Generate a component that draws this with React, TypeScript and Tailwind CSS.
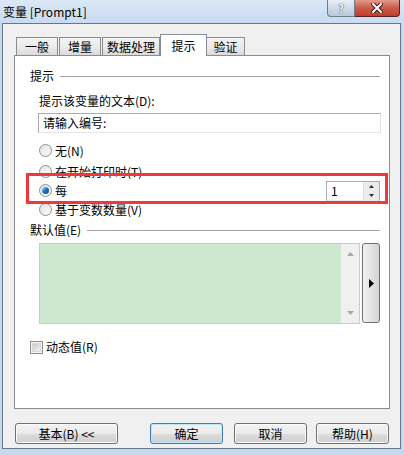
import React from 'react';

const FONT = { fontFamily: '"Noto Sans CJK SC", "Liberation Sans", sans-serif' };

const Radio = ({ checked }: { checked?: boolean }) => (
  <span className="w-[13px] h-[13px] rounded-full border border-[#8f8f8f] bg-gradient-to-br from-[#e4e4e4] to-[#fbfbfb] flex items-center justify-center shrink-0">
    {checked && (
      <span className="w-[7px] h-[7px] rounded-full bg-gradient-to-br from-[#9ad4f6] via-[#1a73c6] to-[#0a4d94]" />
    )}
  </span>
);

const RadioRow = ({ label, checked, children }: { label: string; checked?: boolean; children?: React.ReactNode }) => (
  <div className="flex items-center h-[21px] pl-[24px] pr-[9px]">
    <Radio checked={checked} />
    <span className="ml-[3px] text-[12px] leading-none text-black">{label}</span>
    <div className="flex-1" />
    {children}
  </div>
);

const GroupHeader = ({ label }: { label: string }) => (
  <div className="flex items-center h-[16px] pl-[15px] pr-[9px]">
    <span className="text-[12px] leading-none text-black">{label}</span>
    <div className="flex-1 ml-[6px] h-px bg-[#a0a0a0]" />
  </div>
);

const Tab = ({ label, selected, w }: { label: string; selected?: boolean; w: string }) =>
  selected ? (
    <div className={`${w} h-[22px] -mx-px border border-b-0 border-[#898c95] bg-white flex items-start justify-center pt-[2px] text-[12px] relative z-10`}>
      {label}
    </div>
  ) : (
    <div className={`${w} h-[19px] mt-[3px] border border-b-0 border-[#898c95] bg-gradient-to-b from-[#f3f3f3] via-[#ebebeb] to-[#d8d8d8] flex items-center justify-center text-[12px] leading-none mr-px`}>
      {label}
    </div>
  );

const Btn = ({ label, w, focus }: { label: string; w: string; focus?: boolean }) => (
  <div
    className={`${w} h-[21px] rounded-[3px] border ${
      focus ? 'border-[#3c7fb1] shadow-[inset_0_0_0_1px_#bfe7fb]' : 'border-[#707070] shadow-[inset_0_0_0_1px_#fcfcfc]'
    } bg-[linear-gradient(#f2f2f2_0%,#ebebeb_50%,#dddddd_50%,#cfcfcf_100%)] flex items-center justify-center text-[12px] leading-none text-black`}
  >
    {label}
  </div>
);

export default function App() {
  return (
    <div className="w-[404px] h-[455px] bg-[#c5daf0] flex flex-col relative overflow-hidden" style={FONT}>
      {/* Title bar */}
      <div className="h-[23px] flex items-start bg-gradient-to-b from-[#dbe8f7] to-[#c8dbf1] relative">
        <span className="ml-[3px] mt-[3px] text-[12px] text-black">变量 [Prompt1]</span>
        <div className="flex-1" />
        <div className="flex mr-[4px]">
          <div className="w-[28px] h-[17px] rounded-bl-[4px] border border-t-0 border-[#6f7c8c] bg-gradient-to-b from-[#e8eef6] to-[#b9c8db] flex items-center justify-center">
            <span className="text-[11px] font-bold text-white leading-none [text-shadow:0_0_1px_#333,0_0_1px_#333]">?</span>
          </div>
          <div className="w-[45px] h-[17px] rounded-br-[4px] border border-t-0 border-l-0 border-[#5a2020] bg-gradient-to-b from-[#e49a8b] via-[#c95a48] to-[#c23d2a] flex items-center justify-center">
            <svg width="12" height="10" viewBox="0 0 12 10">
              <path d="M2 1 L10 9 M10 1 L2 9" stroke="#3a1a18" strokeWidth="4" strokeLinecap="square" />
              <path d="M2 1 L10 9 M10 1 L2 9" stroke="#ffffff" strokeWidth="2" strokeLinecap="square" />
            </svg>
          </div>
        </div>
      </div>

      {/* Client area */}
      <div className="ml-[2px] w-[399px] h-[426px] border border-[#6b7685] bg-[#f0f0f0] flex flex-col">
        <div className="pl-[11px] pt-[11px]">
          <div className="flex items-end h-[21px] pl-[2px]">
            <Tab label="一般" w="w-[42px]" />
            <Tab label="增量" w="w-[42px]" />
            <Tab label="数据处理" w="w-[58px]" />
            <Tab label="提示" w="w-[47px]" selected />
            <Tab label="验证" w="w-[39px]" />
          </div>
          <div className="w-[376px] h-[354px] -mt-px border border-[#898c95] bg-white relative">
            <div className="pt-[12px]">
              <GroupHeader label="提示" />
              <div className="pl-[24px] mt-[9px] h-[16px] flex items-center text-[12px] leading-none">提示该变量的文本(D):</div>
              <div className="ml-[23px] mr-[8px] mt-[4px] h-[20px] border border-[#abadb3] border-b-[#e3e9ef] border-r-[#dbdfe6] flex items-center pl-[4px] text-[12px] leading-none">
                请输入编号:
              </div>
              <div className="mt-[7px]">
                <RadioRow label="无(N)" />
                <RadioRow label="在开始打印时(T)" />
                <div className="h-[17px] flex items-center pl-[24px] pr-[9px]">
                  <Radio checked />
                  <span className="ml-[3px] text-[12px] leading-none">每</span>
                  <div className="flex-1" />
                  <div className="w-[54px] h-[20px] border border-[#abadb3] border-b-[#e3e9ef] flex items-center">
                    <span className="flex-1 pl-[4px] text-[12px] leading-none">1</span>
                    <div className="w-[16px] h-full flex flex-col bg-[#ececec] border-l border-[#e0e0e0]">
                      <div className="flex-1 flex items-center justify-center">
                        <svg width="5" height="3" viewBox="0 0 5 3"><path d="M0 3 L2.5 0 L5 3 Z" fill="#333" /></svg>
                      </div>
                      <div className="flex-1 flex items-center justify-center">
                        <svg width="5" height="3" viewBox="0 0 5 3"><path d="M0 0 L2.5 3 L5 0 Z" fill="#333" /></svg>
                      </div>
                    </div>
                  </div>
                </div>
                <RadioRow label="基于变数数量(V)" />
              </div>
              <div className="mt-[2px]">
                <GroupHeader label="默认值(E)" />
              </div>
              <div className="flex mt-[5px] pl-[24px]">
                <div className="w-[321px] h-[81px] border border-[#c8ccd2] bg-[#cde8cf] flex justify-end">
                  <div className="w-[18px] h-full bg-[#f0f0f0] flex flex-col items-center justify-between py-[8px]">
                    <svg width="7" height="4" viewBox="0 0 7 4"><path d="M0 4 L3.5 0 L7 4 Z" fill="#a8a8a8" /></svg>
                    <svg width="7" height="4" viewBox="0 0 7 4"><path d="M0 0 L3.5 4 L7 0 Z" fill="#a8a8a8" /></svg>
                  </div>
                </div>
                <div className="ml-[2px] w-[18px] h-[80px] rounded-[3px] border border-[#707070] bg-gradient-to-r from-[#f2f2f2] to-[#d4d4d4] flex items-center justify-center">
                  <svg width="5" height="9" viewBox="0 0 5 9"><path d="M0 0 L5 4.5 L0 9 Z" fill="#000" /></svg>
                </div>
              </div>
              <div className="flex items-center mt-[15px] pl-[15px] h-[16px]">
                <span className="w-[13px] h-[13px] border border-[#8f8f8f] bg-[#f4f4f4] flex items-center justify-center">
                  <span className="w-[9px] h-[9px] bg-gradient-to-br from-[#cbcbcb] to-[#f3f3f3] border border-[#dadada]" />
                </span>
                <span className="ml-[3px] text-[12px] leading-none">动态值(R)</span>
              </div>
            </div>
            {/* Red highlight box */}
            <div className="absolute left-[11px] top-[117px] w-[362px] h-[31px] border-[3px] border-[#f03838] pointer-events-none" />
          </div>
        </div>
        <div className="flex items-center pl-[12px] mt-[14px]">
          <Btn label="基本(B) <<" w="w-[103px]" />
          <div className="ml-[32px]"><Btn label="确定" w="w-[73px]" focus /></div>
          <div className="ml-[11px]"><Btn label="取消" w="w-[73px]" /></div>
          <div className="ml-[9px]"><Btn label="帮助(H)" w="w-[73px]" /></div>
        </div>
      </div>
    </div>
  );
}
